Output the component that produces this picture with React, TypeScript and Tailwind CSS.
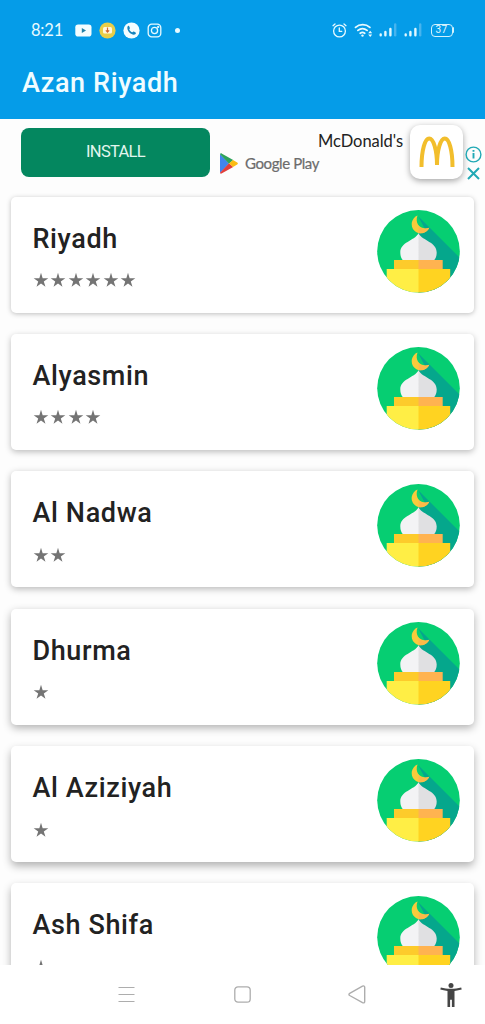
import { useState } from 'react';

interface City {
  name: string;
  rating: number;
  shadow: string;
}

const CITIES: City[] = [
  { name: 'Riyadh', rating: 6, shadow: 'shadow-[0_1px_5px_rgba(0,0,0,0.25)]' },
  { name: 'Alyasmin', rating: 4, shadow: 'shadow-[0_2px_6px_rgba(0,0,0,0.26)]' },
  { name: 'Al Nadwa', rating: 2, shadow: 'shadow-[0_2px_7px_rgba(0,0,0,0.28)]' },
  { name: 'Dhurma', rating: 1, shadow: 'shadow-[0_3px_8px_rgba(0,0,0,0.3)]' },
  { name: 'Al Aziziyah', rating: 1, shadow: 'shadow-[0_4px_8px_rgba(0,0,0,0.3)]' },
  { name: 'Ash Shifa', rating: 1, shadow: 'shadow-[0_4px_8px_rgba(0,0,0,0.3)]' },
];

function SignalBars() {
  return (
    <svg width="18" height="14" viewBox="0 0 18 14" strokeWidth="2.4" strokeLinecap="round">
      <path d="M1.7 11.4v.8M6.4 9v3.2M11.4 6v6.2" stroke="#e3f8ff" />
      <path d="M16.2 1.4v10.8" stroke="#47b4ee" />
    </svg>
  );
}

function StatusBar() {
  return (
    <div className="flex h-[60px] items-center pl-[31px] text-[#e8faff]">
      <span className="w-[44px] font-['Lato',sans-serif] text-[16.5px] leading-5 tracking-[-0.2px]">8:21</span>
      <svg width="17" height="13" viewBox="0 0 17 13">
        <rect x="0.3" y="0.5" width="16.2" height="12" rx="2.8" fill="#f4fdff" />
        <path d="M6.8 4v5l4.2-2.5z" fill="#2382a8" />
      </svg>
      <svg className="ml-[7px]" width="17" height="17" viewBox="0 0 17 17">
        <circle cx="8.5" cy="8.5" r="8.1" fill="#e9ce48" />
        <rect x="4" y="5" width="9" height="6.5" rx="1.5" fill="#fff8df" />
        <path d="M8.5 5.5V10M6.9 8.4l1.6 1.8 1.6-1.8" fill="none" stroke="#d5652c" strokeWidth="1.2" />
      </svg>
      <svg className="ml-[7px]" width="17" height="17" viewBox="0 0 17 17">
        <circle cx="8.5" cy="8.5" r="8.1" fill="#f4fdff" />
        <path d="M4.7 4.3c.6-.7 1.3-.5 1.6.2l.6 1.4c.2.5-.7 1.1-.6 1.5.5 1.2 1.8 2.4 3.1 2.9.5.1 1-.9 1.5-.7l1.6.8c.7.3.5 1.3-.2 1.8-1.4 1-4 .2-5.7-1.4C4.8 9.1 3.7 6 4.7 4.3z" fill="#1583bd" />
      </svg>
      <svg className="ml-[7px]" width="15" height="15" viewBox="0 0 15 15" fill="none" stroke="currentColor" strokeWidth="1.3">
        <rect x="1.2" y="1.2" width="12.6" height="12.6" rx="3.6" />
        <circle cx="7.5" cy="7.5" r="3.1" />
        <circle cx="11.2" cy="3.9" r="0.5" />
      </svg>
      <span className="ml-[13px] size-[5px] rounded-full bg-[#e8faff]" />

      <svg className="ml-auto" width="15" height="15" viewBox="0 0 15 15" fill="none" stroke="currentColor" strokeWidth="1.3" strokeLinecap="round">
        <circle cx="7.5" cy="8" r="5.9" />
        <path d="M7.3 5v3.3h2.5M1 2.7l2-1.7M14 2.7l-2-1.7" />
      </svg>
      <svg className="ml-[7px]" width="19" height="15" viewBox="0 0 19 15" fill="none" stroke="currentColor" strokeLinecap="round">
        <path d="M1.5 4.4a11 11 0 0 1 14.4 0M3.9 7.4a7.4 7.4 0 0 1 9.2 0M6.2 10.2a4 4 0 0 1 4.5 0" strokeWidth="1.8" />
        <circle cx="8.5" cy="12.6" r="1.2" fill="currentColor" stroke="none" />
        <path d="M14.2 10.2l2-2.5 2 2.5zM14.2 11.6l2 2.5 2-2.5z" fill="currentColor" stroke="none" />
      </svg>
      <div className="ml-[6px] flex gap-[7px]">
        <SignalBars />
        <SignalBars />
      </div>
      <div className="ml-[9px] flex h-[13px] w-[22px] items-center justify-center rounded-[4px] border-[1.5px] border-[#d3f2fd] font-['Roboto',sans-serif] text-[10px] leading-none tracking-[0.3px]">37</div>
      <span className="mr-[31px] h-[6px] w-[1.5px] rounded-r bg-[#d3f2fd]" />
    </div>
  );
}

function AdBanner({ onClose }: { onClose: () => void }) {
  return (
    <div className="flex h-[68px] items-start bg-[#fdfdfd] font-['Roboto',sans-serif]">
      <button className="ml-[21px] mt-[9px] h-[49px] w-[189px] shrink-0 rounded-[8px] bg-[#04875f] text-[16.5px] tracking-[-0.7px] text-[#e2f6ee]">
        INSTALL
      </button>
      <div className="ml-[10px] flex w-[183px] flex-col pt-[11px]">
        <span className="self-end font-['Lato',sans-serif] text-[16.5px] leading-[22px] tracking-[-0.05px] text-[#222]">McDonald's</span>
        <div className="flex items-center">
          <svg width="18" height="21" viewBox="0 0 18 21">
            <path d="M0 1v19L9 10.5z" fill="#4285ee" />
            <path d="M0 1.2C.2.2 1.2.2 2 .7l11.2 6.4L9 10.7z" fill="#2fa35b" />
            <path d="M0 19.8c.2 1 1.2 1 2 .5l11.2-6.4L9 10.2z" fill="#e1403c" />
            <path d="M13 7l4.2 2.5c.9.5.9 1.500 0 2L13 14l-4-3.500z" fill="#fbbc12" />
          </svg>
          <span className="ml-[7px] whitespace-nowrap font-['Lato',sans-serif] text-[15px] leading-[22px] tracking-[-0.4px] text-[#6c6c6c] [-webkit-text-stroke:0.2px_#6c6c6c]">Google Play</span>
        </div>
      </div>
      <div className="ml-[7px] mt-[6px] flex h-[54px] w-[53px] shrink-0 items-center justify-center rounded-[10px] bg-white shadow-[0_2px_6px_rgba(0,0,0,0.35)]">
        <svg width="36" height="32" viewBox="0 0 36 32" fill="none" stroke="#f2be2c" strokeWidth="4">
          <path d="M2.5 31C2.5 14 6 2.5 10.2 2.5S18 14 18 29C18 14 21.6 2.5 25.8 2.5S33.5 14 33.5 31" />
        </svg>
      </div>
      <div className="ml-[2px] mt-[27px] flex flex-col items-center gap-[4px] text-[#21a9b5]">
        <svg width="17" height="17" viewBox="0 0 17 17" fill="none" stroke="currentColor">
          <circle cx="8.5" cy="8.5" r="7.4" strokeWidth="1.4" />
          <path d="M8.5 7v5.5M8.5 4v1.7" strokeWidth="1.9" />
        </svg>
        <button onClick={onClose} aria-label="Close">
          <svg width="13" height="13" viewBox="0 0 13 13" stroke="currentColor" strokeWidth="2">
            <path d="M1 1l11 11M12 1L1 12" />
          </svg>
        </button>
      </div>
    </div>
  );
}

function MosqueIcon() {
  return (
    <svg className="mr-[14.5px] mt-[13px] shrink-0" width="83" height="83" viewBox="0 0 83 83">
      <clipPath id="disc">
        <circle cx="41.5" cy="41.3" r="41.3" />
      </clipPath>
      <g clipPath="url(#disc)">
        <rect width="83" height="83" fill="#06ce72" />
        <path d="M41 6L90 55v30H41V24l7-5z" fill="#05a78c" />
        <path d="M40.5 5.6a9.2 9.2 0 1 0 11.8 12.2c-9 2.800-14.800-4-11.800-12.200z" fill="#f8cb3c" />
        <path d="M41.5 16.5c2.600 2.400 6.300 2.700 10.800 1.300-1.800 3.900-5.800 6-10.800 5.200z" fill="#fcb94a" />
        <path d="M41.5 23.5C37 31 23.300 32 23.300 42.500c0 3.500 1 6 2.900 8H42V23.500z" fill="#f3f3f5" />
        <path d="M41.5 23.5C46 31 59.700 32 59.700 42.500c0 3.500-1 6-2.900 8H41.500z" fill="#e0e0e2" />
        <path d="M17 50h25v9.500H17z" fill="#fdcb2b" />
        <path d="M41.5 50h24.200v9.500H41.500z" fill="#ffb350" />
        <path d="M9.7 59H42v24H9.700z" fill="#ffee45" />
        <path d="M41.5 59h31.700v24H41.500z" fill="#ffd321" />
      </g>
    </svg>
  );
}

function CityCard({ city }: { city: City }) {
  return (
    <div className={`flex h-[116px] shrink-0 justify-between rounded-[5px] bg-white pl-[21.5px] ${city.shadow}`}>
      <div className="flex flex-col pt-[26px]">
        <h2 className="font-['Roboto',sans-serif] text-[27px] font-medium leading-[32px] tracking-[0.62px] text-[#222]">{city.name}</h2>
        <div className="mt-[17.5px] flex gap-[1.5px] text-[#747474]">
          {Array.from({ length: city.rating }, (_, i) => (
            <svg key={i} width="16" height="16" viewBox="0 0 24 24" fill="currentColor">
              <path d="M12 1l2.500 8.300H23l-6.800 5 2.500 8L12 17.400l-6.700 4.900 2.500-8L1 9.300h8.500z" />
            </svg>
          ))}
        </div>
      </div>
      <MosqueIcon />
    </div>
  );
}

function NavBar() {
  return (
    <nav className="flex h-[59px] shrink-0 items-center bg-white pl-[118px] text-[#adadad]">
      <svg width="17" height="17" viewBox="0 0 17 17" stroke="currentColor" strokeWidth="1.2">
        <path d="M.5 1.5h16M.5 8.5h16M.5 15.5h16" />
      </svg>
      <svg className="ml-[99px]" width="17" height="17" viewBox="0 0 17 17" fill="none" stroke="currentColor" strokeWidth="1.3">
        <rect x="0.8" y="0.8" width="15.4" height="15.4" rx="3.2" />
      </svg>
      <svg className="ml-[97px]" width="18" height="19" viewBox="0 0 18 19" fill="none" stroke="currentColor" strokeWidth="1.4" strokeLinejoin="round">
        <path d="M1.7 8.3L14.5 1.2c1.2-.6 2.200-.2 2.200 1v14.400c0 1.200-1 1.600-2.200 1L1.700 10.500c-1-.6-1-1.600 0-2.200z" />
      </svg>
      <svg className="ml-[74px]" width="22" height="24" viewBox="0 0 22 24" fill="#454545">
        <circle cx="11" cy="2.6" r="2.5" />
        <path d="M.8 4.4C7 6.3 15 6.3 21.2 4.4l.5 2.200c-2.100.6-4.500 1.100-7.200 1.400V24h-2.600v-7.200h-1.800V24H7.500V8C4.800 7.700 2.400 7.200.3 6.600z" />
      </svg>
    </nav>
  );
}

function App() {
  const [showAd, setShowAd] = useState(true);

  return (
    <div className="flex h-[1024px] w-[485px] flex-col overflow-hidden bg-[#fdfdfd]">
      <header className="h-[119px] shrink-0 bg-[#059ce8]">
        <StatusBar />
        <h1 className="pl-[22px] pt-[7px] font-['Roboto',sans-serif] text-[27px] font-medium leading-[32px] tracking-[0.62px] text-[#f0fcff]">Azan Riyadh</h1>
      </header>
      {showAd && <AdBanner onClose={() => setShowAd(false)} />}
      <main className="flex min-h-0 flex-1 flex-col gap-[21.4px] overflow-hidden px-[11px] pt-[9.5px]">
        {CITIES.map((city) => (
          <CityCard key={city.name} city={city} />
        ))}
      </main>
      <NavBar />
    </div>
  );
}

export default App;
